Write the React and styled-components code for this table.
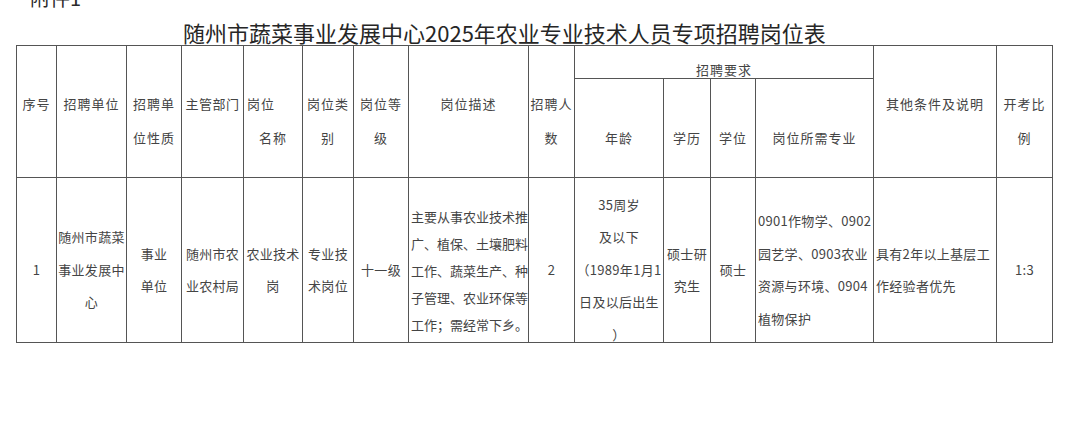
import styled, { createGlobalStyle } from "styled-components";

const GlobalStyle = createGlobalStyle`
  html, body {
    margin: 0;
    padding: 0;
    background: #ffffff;
  }
  body {
    font-family: "Noto Sans CJK SC", "Noto Sans", sans-serif;
    color: #3c3c3c;
  }
`;

const COLS = [40, 70, 55, 62, 59, 51, 55, 120, 46, 89, 47, 45, 118, 123, 56];

// header cells spanning both header rows
const HEAD_TOP = [
  { lines: ["序号"] },
  { lines: ["招聘单位"] },
  { lines: ["招聘单", "位性质"] },
  { lines: ["主管部门"], tight: true },
  { lines: ["岗位", "名称"], aligns: ["left", "center"] },
  { lines: ["岗位类", "别"] },
  { lines: ["岗位等", "级"] },
  { lines: ["岗位描述"] },
  { lines: ["招聘人", "数"] },
];

const HEAD_SUB = ["年龄", "学历", "学位", "岗位所需专业"];

const ROW = [
  { lines: ["1"] },
  { lines: ["随州市蔬菜", "事业发展中", "心"] },
  { lines: ["事业", "单位"] },
  { lines: ["随州市农", "业农村局"] },
  { lines: ["农业技术", "岗"] },
  { lines: ["专业技", "术岗位"] },
  { lines: ["十一级"] },
  {
    lines: [
      "主要从事农业技术推",
      "广、植保、土壤肥料",
      "工作、蔬菜生产、种",
      "子管理、农业环保等",
      "工作；需经常下乡。",
    ],
    align: "left",
    lh: 27,
    ls: 0,
  },
  { lines: ["2"] },
  { lines: ["35周岁", "及以下", "（1989年1月1", "日及以后出生", "）"] },
  { lines: ["硕士研", "究生"] },
  { lines: ["硕士"] },
  {
    lines: ["0901作物学、0902", "园艺学、0903农业", "资源与环境、0904", "植物保护"],
    align: "left",
  },
  { lines: ["具有2年以上基层工", "作经验者优先"], align: "left" },
  { lines: ["1:3"] },
];

export default function App() {
  return (
    <Page>
      <GlobalStyle />
      <Attachment>附件1</Attachment>
      <Title>随州市蔬菜事业发展中心2025年农业专业技术人员专项招聘岗位表</Title>
      <Table>
        <colgroup>
          {COLS.map((w, i) => (
            <col key={i} style={{ width: w }} />
          ))}
        </colgroup>
        <thead>
          <HeadRow $h={33}>
            {HEAD_TOP.map((c, i) => (
              <HeadCell key={i} rowSpan={2} $pad={41} $tight={c.tight}>
                {c.lines.map((l, j) => (
                  <Line key={j} $align={c.aligns ? c.aligns[j] : "center"}>
                    {l}
                  </Line>
                ))}
              </HeadCell>
            ))}
            <GroupCell colSpan={4}>招聘要求</GroupCell>
            <HeadCell rowSpan={2} $pad={41}>
              <Line>其他条件及说明</Line>
            </HeadCell>
            <HeadCell rowSpan={2} $pad={41}>
              <Line>开考比</Line>
              <Line>例</Line>
            </HeadCell>
          </HeadRow>
          <HeadRow $h={99}>
            {HEAD_SUB.map((t) => (
              <HeadCell key={t} $pad={42}>
                <Line>{t}</Line>
              </HeadCell>
            ))}
          </HeadRow>
        </thead>
        <tbody>
          <tr>
            {ROW.map((c, i) => (
              <BodyCell key={i}>
                <CellBox $align={c.align || "center"}>
                  <CellText $lh={c.lh || 32.5} $ls={c.ls ?? 0.3}>
                    {c.lines.map((l, j) => (
                      <span key={j}>{l}</span>
                    ))}
                  </CellText>
                </CellBox>
              </BodyCell>
            ))}
          </tr>
        </tbody>
      </Table>
    </Page>
  );
}

const Page = styled.div`
  width: 1080px;
  height: 425px;
  padding: 0 16px;
  box-sizing: border-box;
  overflow: hidden;
`;

const Attachment = styled.div`
  margin-top: -12px;
  padding-left: 14px;
  height: 20px;
  font-size: 20px;
  line-height: 20px;
  color: #2a2a2a;
`;

const Title = styled.h1`
  margin: 13px 0 0 167px;
  height: 22px;
  font-size: 22px;
  line-height: 22px;
  font-weight: 400;
  color: #262626;
  white-space: nowrap;
`;

const Table = styled.table`
  margin-top: 2px;
  width: 1036px;
  table-layout: fixed;
  border-collapse: collapse;
  font-size: 13px;
  color: #444444;
`;

const HeadRow = styled.tr`
  height: ${(p) => p.$h}px;
`;

const HeadCell = styled.th`
  border: 1px solid #555555;
  padding: ${(p) => p.$pad}px 0 0;
  vertical-align: top;
  font-weight: 400;
  letter-spacing: ${(p) => (p.$tight ? "0.5px" : "1px")};
  line-height: 34px;
  white-space: nowrap;
`;

const GroupCell = styled.th`
  border: 1px solid #555555;
  padding: 0;
  vertical-align: bottom;
  font-weight: 400;
  letter-spacing: 1px;
  line-height: 16px;
`;

const Line = styled.span`
  display: block;
  text-align: ${(p) => p.$align || "center"};
  padding-left: ${(p) => (p.$align === "left" ? "3px" : "0")};
`;

const BodyCell = styled.td`
  border: 1px solid #555555;
  padding: 0;
  height: 164px;
  vertical-align: top;
`;

const CellBox = styled.div`
  height: 164px;
  box-sizing: border-box;
  padding: 20px 0 0 ${(p) => (p.$align === "left" ? "2px" : "0")};
  display: flex;
  align-items: center;
  justify-content: ${(p) => (p.$align === "left" ? "flex-start" : "center")};
  text-align: ${(p) => p.$align};
  overflow: hidden;
`;

const CellText = styled.div`
  display: flex;
  flex-direction: column;
  flex-shrink: 0;
  line-height: ${(p) => p.$lh}px;
  letter-spacing: ${(p) => p.$ls}px;
  white-space: nowrap;
`;
